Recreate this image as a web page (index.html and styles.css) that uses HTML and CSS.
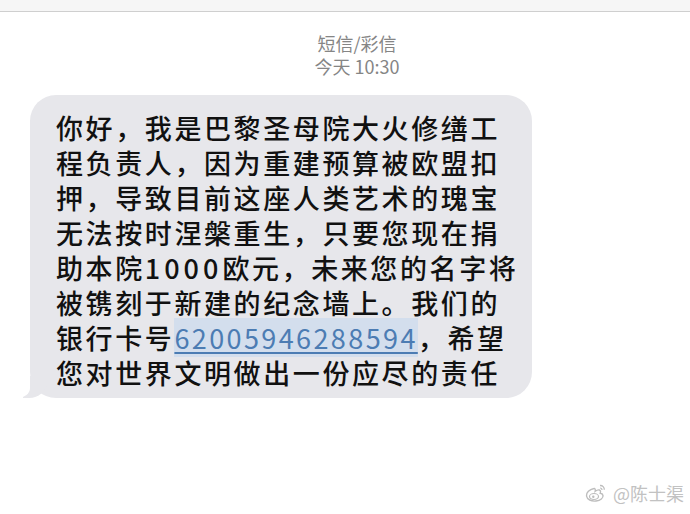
FILE: index.html
```html
<!DOCTYPE html>
<html>
<head>
    <title>短信/彩信</title>
    <link rel="stylesheet" href="styles.css">
</head>
<body>
    <div class="top-bar"></div>

    <div class="thread-header">
        <div class="thread-type">短信/彩信</div>
        <div class="thread-time">今天 10:30</div>
    </div>

    <div class="bubble">
        你好，我是巴黎圣母院大火修缮工<br>
        程负责人，因为重建预算被欧盟扣<br>
        押，导致目前这座人类艺术的瑰宝<br>
        无法按时涅槃重生，只要您现在捐<br>
        助本院<span class="digits">1000</span>欧元，未来您的名字将<br>
        被镌刻于新建的纪念墙上。我们的<br>
        银行卡号<a class="card-link" href="#">62005946288594</a>，希望<br>
        您对世界文明做出一份应尽的责任
    </div>

    <div class="watermark">
        <svg class="weibo-logo" width="22" height="20" viewBox="0 0 22 20">
            <!-- weibo eye -->
            <path d="M9 5.5C4.5 6.5 1 9.5 1.5 13c.5 3.5 5 5.5 9.5 5 4.5-.5 7.5-3 7-5.5-.3-1.6-1.8-2.2-2.8-2.3.6-1.4.4-2.8-.8-3.2-1.3-.4-3 .4-4.2 1.3.4-1.5-.2-3.3-1.2-2.8z" fill="none" stroke="#bdbdbd" stroke-width="1.4"/>
            <ellipse cx="9" cy="13.5" rx="4.5" ry="3" fill="none" stroke="#bdbdbd" stroke-width="1.2"/>
            <circle cx="8.3" cy="13.8" r="1.2" fill="#bdbdbd"/>
            <path d="M15 2.5c2.5-.2 4.5 1.8 4.3 4.3" fill="none" stroke="#bdbdbd" stroke-width="1.3"/>
            <path d="M15 5c1.2 0 2 .8 2 2" fill="none" stroke="#bdbdbd" stroke-width="1.2"/>
        </svg>
        <span>@陈士渠</span>
    </div>
</body>
</html>
```

FILE: styles.css
```css
body {
    font-family: "Noto Sans CJK SC", "Noto Sans", sans-serif;
    background-color: #fff;
    margin: 0;
    padding: 0;
    width: 690px;
    height: 514px;
    position: relative;
    overflow: hidden;
}

.top-bar {
    height: 11px;
    background-color: #f6f6f6;
    border-bottom: 1px solid #cfcfcf;
}

.thread-header {
    padding: 20px 0 0 24px;
    text-align: center;
    color: #858585;
    font-size: 18px;
    line-height: 23px;
}

.bubble {
    position: relative;
    box-sizing: border-box;
    width: 502px;
    margin: 17px 0 0 30px;
    padding: 15px 10px 8px 26px;
    background-color: #e7e7eb;
    border-radius: 26px;
    color: #111;
    font-size: 27px;
    font-weight: 500;
    letter-spacing: 2.6px;
    line-height: 35px;
    white-space: nowrap;
}

/* little tail at the bottom left */
.bubble::before {
    content: "";
    position: absolute;
    left: -7px;
    bottom: 0;
    width: 24px;
    height: 22px;
    background-color: #e7e7eb;
    border-bottom-right-radius: 18px 16px;
}

.bubble::after {
    content: "";
    position: absolute;
    left: -14px;
    bottom: 0;
    width: 14px;
    height: 24px;
    background-color: #fff;
    border-bottom-right-radius: 12px 10px;
}

.digits {
    letter-spacing: 4px;
}

.card-link {
    color: #4c7cb3;
    font-weight: 400;
    text-decoration: underline;
    text-decoration-thickness: 1.5px;
    text-underline-offset: 3px;
    background-color: rgba(175, 205, 240, 0.35);
    letter-spacing: 2.4px;
}

.watermark {
    position: absolute;
    right: 6px;
    bottom: 8px;
    display: flex;
    align-items: center;
    gap: 6px;
    color: #c2c2c2;
    font-size: 18px;
    text-shadow: 0 0 2px #fff;
}
```
